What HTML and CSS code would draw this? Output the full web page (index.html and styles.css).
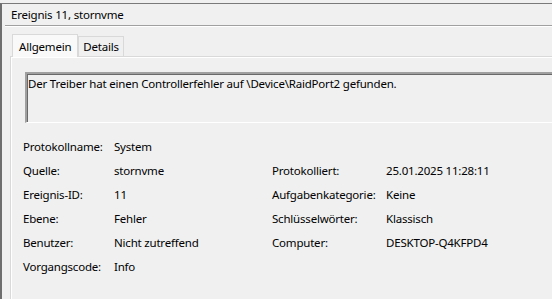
FILE: index.html
```html
<!DOCTYPE html>
<html lang="de">
<head>
  <meta charset="UTF-8">
  <title>Ereignis 11, stornvme</title>
  <link rel="stylesheet" href="styles.css">
</head>
<body>
  <div class="window">
    <div class="title">Ereignis 11, stornvme</div>

    <div class="tabs">
      <div class="tab active">Allgemein</div>
      <div class="tab">Details</div>
    </div>

    <div class="panel">
      <div class="message">Der Treiber hat einen Controllerfehler auf \Device\RaidPort2 gefunden.</div>

      <div class="props">
        <span class="label">Protokollname:</span>
        <span class="value">System</span>
        <span class="label"></span>
        <span class="value"></span>

        <span class="label">Quelle:</span>
        <span class="value">stornvme</span>
        <span class="label">Protokolliert:</span>
        <span class="value">25.01.2025 11:28:11</span>

        <span class="label">Ereignis-ID:</span>
        <span class="value">11</span>
        <span class="label">Aufgabenkategorie:</span>
        <span class="value">Keine</span>

        <span class="label">Ebene:</span>
        <span class="value">Fehler</span>
        <span class="label">Schlüsselwörter:</span>
        <span class="value">Klassisch</span>

        <span class="label">Benutzer:</span>
        <span class="value">Nicht zutreffend</span>
        <span class="label">Computer:</span>
        <span class="value">DESKTOP-Q4KFPD4</span>

        <span class="label">Vorgangscode:</span>
        <span class="value">Info</span>
        <span class="label"></span>
        <span class="value"></span>
      </div>
    </div>
  </div>
</body>
</html>
```

FILE: styles.css
```css
html, body {
  margin: 0;
  padding: 0;
  background-color: #f0f0f0;
  overflow: hidden;
}
body {
  font-family: "Noto Sans", "Open Sans", sans-serif;
  font-size: 11.5px;
  letter-spacing: -0.2px;
  color: #000;
  padding-top: 3px;
}
.window {
  width: 580px;
  height: 300px;
  border-top: 1px solid #7a7a7a;
  border-left: 2px solid #6e6e6e;
  background-color: #f0f0f0;
}
.title {
  height: 21px;
  line-height: 21px;
  padding-left: 6px;
  margin-left: 3px;
  border-bottom: 1px solid #a0a0a0;
  box-shadow: 0 1px 0 #ffffff;
}
.tabs {
  display: flex;
  align-items: flex-end;
  height: 23px;
  margin-top: 7px;
  padding-left: 10px;
}
.tab {
  height: 19px;
  line-height: 19px;
  padding: 0 4px;
  border: 1px solid #d9d9d9;
  border-bottom: none;
  background-color: #f0f0f0;
}
.tab.active {
  height: 22px;
  line-height: 24px;
  padding: 0 6px;
  background-color: #f9f9f9;
  border-color: #d9d9d9;
  position: relative;
  z-index: 1;
  margin-bottom: -1px;
}
.panel {
  margin-left: 8px;
  height: 238px;
  border: 1px solid #d9d9d9;
  border-right: none;
  box-shadow: inset 1px 1px 0 #ffffff, 0 1px 0 #ffffff;
  padding: 15px 0 0 14px;
}
.message {
  height: 46px;
  padding: 2px 0 0 1px;
  border-top: 2px solid #a0a0a0;
  border-left: 2px solid #a0a0a0;
  border-bottom: 1px solid #ffffff;
  box-shadow: inset 1px 1px 0 #696969;
  background-color: #f0f0f0;
  white-space: nowrap;
}
.props {
  display: grid;
  grid-template-columns: 91px 158px 114px auto;
  grid-auto-rows: 24px;
  align-items: center;
  margin: 11px 0 0 -2px;
}
.label, .value {
  white-space: nowrap;
}
```
